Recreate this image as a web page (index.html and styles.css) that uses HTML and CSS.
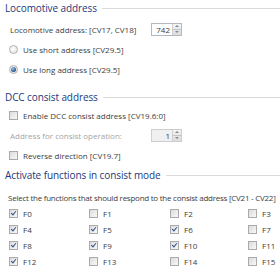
FILE: index.html
```html
<!DOCTYPE html>
<html lang="en">
<head>
  <meta charset="UTF-8">
  <title>Consist settings</title>
  <link rel="stylesheet" href="styles.css">
</head>
<body>
  <div class="group">
    <div class="group-title"><span>Locomotive address</span><span class="rule"></span></div>
    <div class="row">
      <span class="label wide">Locomotive address: [CV17, CV18]</span>
      <span class="spin"><span class="spin-value">742</span><span class="spin-btns"><span class="up"></span><span class="down"></span></span></span>
    </div>
    <div class="row"><span class="radio"></span><span class="label">Use short address [CV29.5]</span></div>
    <div class="row"><span class="radio on"></span><span class="label">Use long address [CV29.5]</span></div>
  </div>

  <div class="group">
    <div class="group-title"><span>DCC consist address</span><span class="rule"></span></div>
    <div class="row"><span class="cb"></span><span class="label">Enable DCC consist address [CV19.6:0]</span></div>
    <div class="row">
      <span class="label wide muted">Address for consist operation:</span>
      <span class="spin off"><span class="spin-value">1</span><span class="spin-btns"><span class="up"></span><span class="down"></span></span></span>
    </div>
    <div class="row"><span class="cb"></span><span class="label">Reverse direction [CV19.7]</span></div>
  </div>

  <div class="group">
    <div class="group-title"><span>Activate functions in consist mode</span><span class="rule"></span></div>
    <div class="row note">Select the functions that should respond to the consist address [CV21 - CV22]</div>
    <div class="fn-grid" id="fnGrid"></div>
  </div>

  <script>
    // F0..F15, checked ones are the ones set in the decoder
    const checked = [0, 4, 5, 6, 8, 9, 10, 12];
    const grid = document.getElementById("fnGrid");
    for (let i = 0; i < 16; i++) {
      const cell = document.createElement("div");
      cell.className = "fn";
      cell.innerHTML = '<span class="cb' + (checked.includes(i) ? ' on' : '') + '"></span><span class="label">F' + i + '</span>';
      grid.appendChild(cell);
    }
  </script>
</body>
</html>
```

FILE: styles.css
```css
body {
  margin: 0;
  font-family: "Open Sans", "Noto Sans", sans-serif;
  font-size: 8px;
  color: #3c3c3c;
  background: #fff;
  width: 280px;
  overflow: hidden;
}

/* Group headings with the thin line running to the right edge */
.group-title {
  display: flex;
  align-items: center;
  gap: 5px;
  height: 16px;
  padding-left: 5px;
  font-family: "Open Sans", sans-serif;
  font-size: 10px;
  letter-spacing: -0.1px;
  color: #23397a;
  white-space: nowrap;
}

.group-title .rule {
  flex: 1;
  border-top: 1px solid #dadada;
  margin-top: 1px;
}

.group:nth-child(1) .group-title { margin-bottom: 3px; }
.group:nth-child(2) { margin-top: 10px; }
.group:nth-child(3) { margin-top: 2px; }
.group:nth-child(3) .group-title { margin-bottom: 6px; }

.row {
  display: flex;
  align-items: center;
  height: 20px;
  padding-left: 9px;
}

.row.note {
  height: 16px;
  padding-left: 8px;
  white-space: nowrap;
  letter-spacing: -0.25px;
}

.label {
  margin-left: 5px;
  white-space: nowrap;
}

.label.wide {
  width: 141px;
  margin-left: 1px;
}

.muted { color: #a4a4a4; }

/* Spin box */
.spin {
  display: flex;
  width: 31px;
  height: 13px;
  border: 1px solid #b5b8be;
  box-sizing: border-box;
  background: #fff;
}

.spin.off {
  background: #f0f0f0;
  border-color: #cdcdcd;
}

.spin-value {
  flex: 1;
  text-align: right;
  padding-right: 2px;
  line-height: 11px;
}

.spin-btns {
  width: 8px;
  display: flex;
  flex-direction: column;
  border-left: 1px solid #d0d0d0;
  background: linear-gradient(#f4f4f4, #dcdcdc);
}

.spin-btns span {
  flex: 1;
  position: relative;
}

.spin-btns .up { border-bottom: 1px solid #c4c4c4; }

.spin-btns span::after {
  content: "";
  position: absolute;
  left: 2px;
  top: 1px;
  border-left: 2px solid transparent;
  border-right: 2px solid transparent;
}

.spin-btns .up::after { border-bottom: 2px solid #7c8a9c; }
.spin-btns .down::after { border-top: 2px solid #7c8a9c; }

/* Radio buttons */
.radio {
  width: 9px;
  height: 9px;
  border-radius: 50%;
  border: 1px solid #b0b0b0;
  box-sizing: border-box;
  background: radial-gradient(circle at 40% 40%, #ffffff, #dedede);
  position: relative;
}

.radio.on::after {
  content: "";
  position: absolute;
  left: 1px;
  top: 1px;
  width: 5px;
  height: 5px;
  border-radius: 50%;
  background: radial-gradient(circle at 40% 35%, #9fc3e8, #20508e 70%);
}

/* Checkboxes */
.cb {
  width: 9px;
  height: 9px;
  border: 1px solid #aaaaaa;
  box-sizing: border-box;
  background: linear-gradient(135deg, #dcdcdc, #f8f8f8);
  position: relative;
  flex: none;
}

.cb.on::after {
  content: "";
  position: absolute;
  left: 2px;
  top: 0px;
  width: 2px;
  height: 4px;
  border-right: 1.5px solid #35508f;
  border-bottom: 1.5px solid #35508f;
  transform: rotate(40deg);
}

/* Function grid F0..F15 */
.fn-grid {
  display: grid;
  grid-template-columns: 80px 81px 78px 40px;
  grid-auto-rows: 16px;
  padding-left: 9px;
}

.fn {
  display: flex;
  align-items: center;
}
```
